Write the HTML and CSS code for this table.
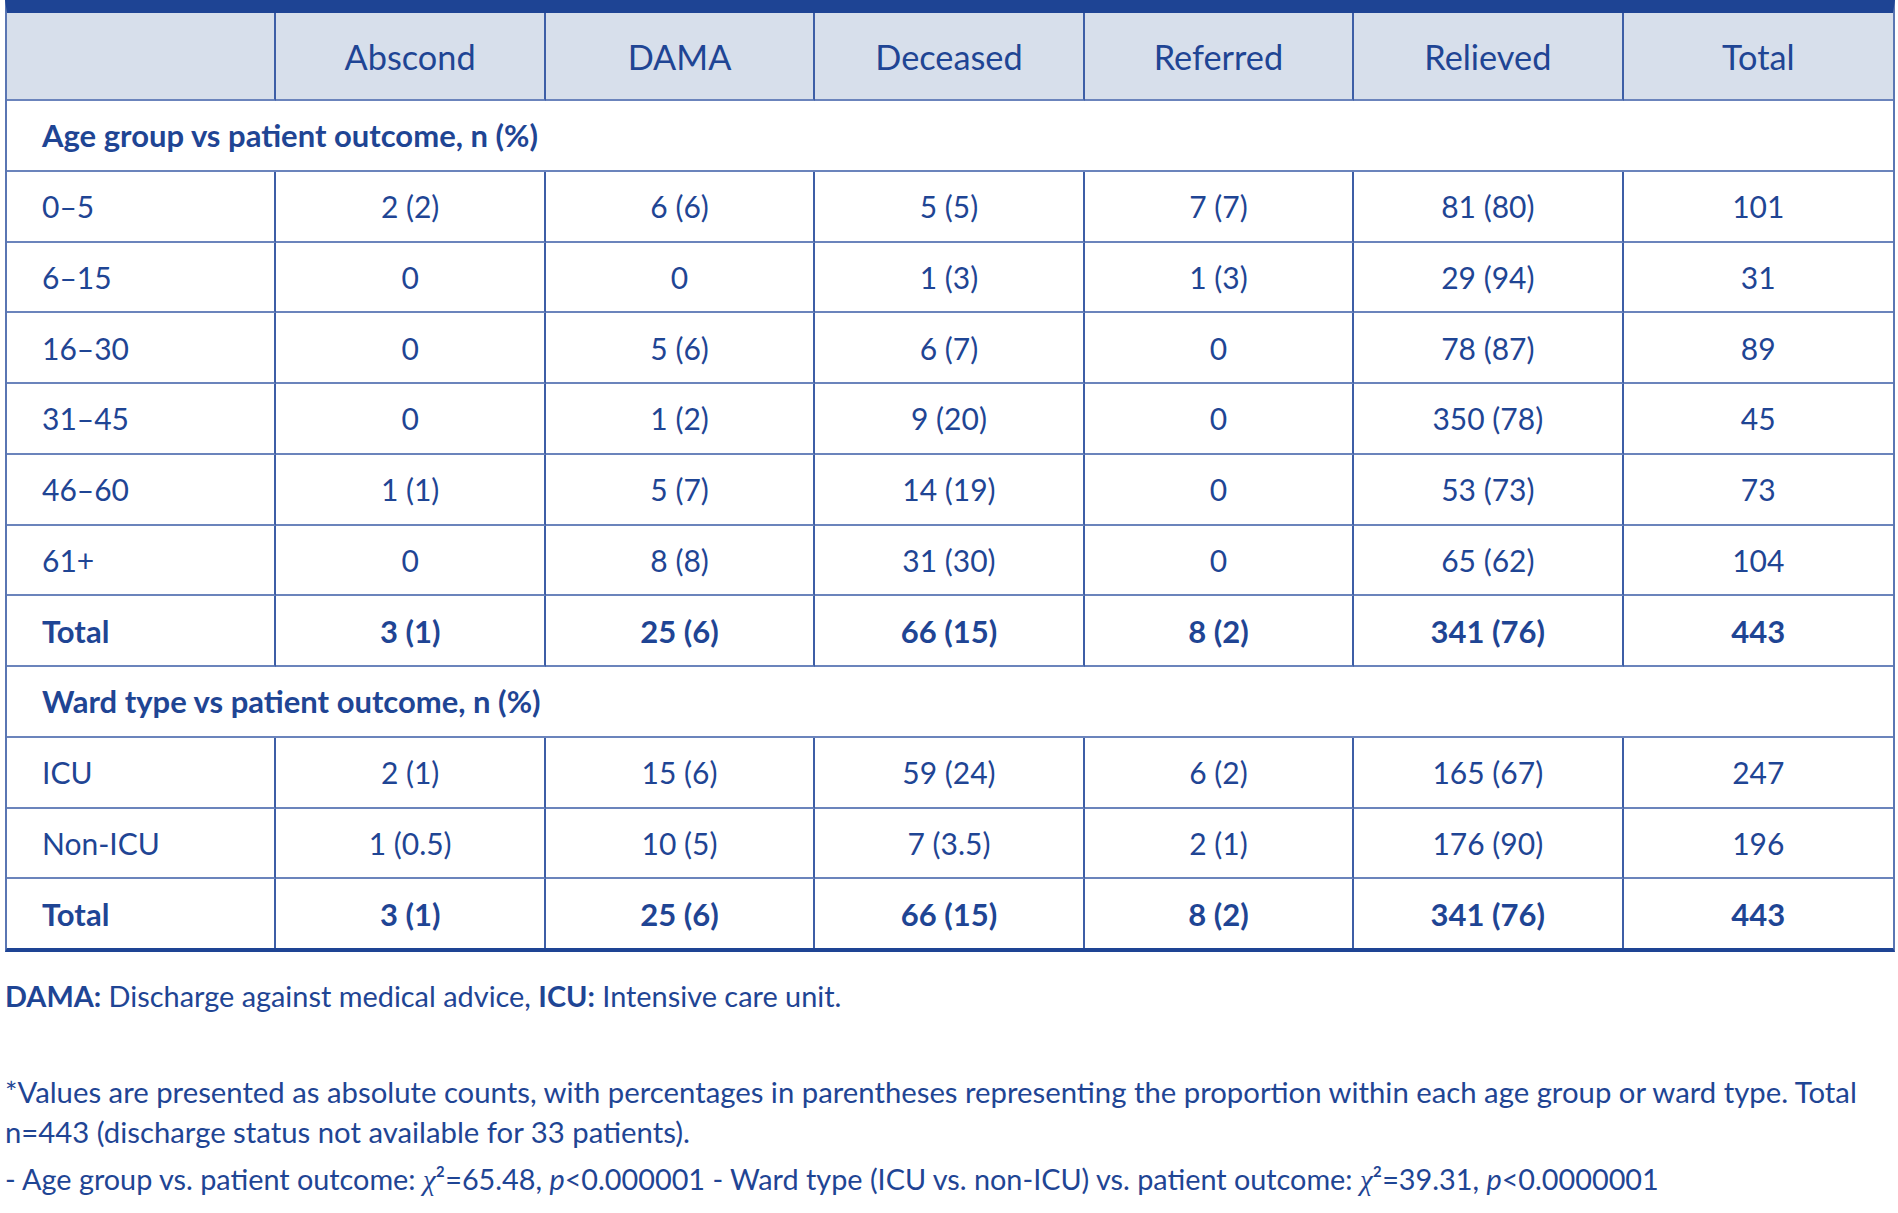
FILE: index.html
```html
<!DOCTYPE html>
<html lang="en">
<head>
<meta charset="utf-8">
<title>Patient outcome by age group and ward type</title>
<link rel="stylesheet" href="styles.css">
</head>
<body>
<main class="page">
  <table class="outcomes">
    <thead>
      <tr>
        <th></th>
        <th>Abscond</th>
        <th>DAMA</th>
        <th>Deceased</th>
        <th>Referred</th>
        <th>Relieved</th>
        <th>Total</th>
      </tr>
    </thead>
    <tbody>
      <tr class="section"><td colspan="7">Age group vs patient outcome, n (%)</td></tr>
      <tr><td>0–5</td><td>2 (2)</td><td>6 (6)</td><td>5 (5)</td><td>7 (7)</td><td>81 (80)</td><td>101</td></tr>
      <tr><td>6–15</td><td>0</td><td>0</td><td>1 (3)</td><td>1 (3)</td><td>29 (94)</td><td>31</td></tr>
      <tr><td>16–30</td><td>0</td><td>5 (6)</td><td>6 (7)</td><td>0</td><td>78 (87)</td><td>89</td></tr>
      <tr><td>31–45</td><td>0</td><td>1 (2)</td><td>9 (20)</td><td>0</td><td>350 (78)</td><td>45</td></tr>
      <tr><td>46–60</td><td>1 (1)</td><td>5 (7)</td><td>14 (19)</td><td>0</td><td>53 (73)</td><td>73</td></tr>
      <tr><td>61+</td><td>0</td><td>8 (8)</td><td>31 (30)</td><td>0</td><td>65 (62)</td><td>104</td></tr>
      <tr class="total"><td>Total</td><td>3 (1)</td><td>25 (6)</td><td>66 (15)</td><td>8 (2)</td><td>341 (76)</td><td>443</td></tr>
      <tr class="section"><td colspan="7">Ward type vs patient outcome, n (%)</td></tr>
      <tr><td>ICU</td><td>2 (1)</td><td>15 (6)</td><td>59 (24)</td><td>6 (2)</td><td>165 (67)</td><td>247</td></tr>
      <tr><td>Non-ICU</td><td>1 (0.5)</td><td>10 (5)</td><td>7 (3.5)</td><td>2 (1)</td><td>176 (90)</td><td>196</td></tr>
      <tr class="total last"><td>Total</td><td>3 (1)</td><td>25 (6)</td><td>66 (15)</td><td>8 (2)</td><td>341 (76)</td><td>443</td></tr>
    </tbody>
  </table>

  <div class="notes">
    <p class="abbr"><b>DAMA:</b> Discharge against medical advice, <b>ICU:</b> Intensive care unit.</p>
    <p class="foot">*Values are presented as absolute counts, with percentages in parentheses representing the proportion within each age group or ward type. Total n=443 (discharge status not available for 33 patients).</p>
    <p class="stats">- Age group vs. patient outcome: <span class="chi">χ</span>²=65.48, <i>p</i>&lt;0.000001 - Ward type (ICU vs. non-ICU) vs. patient outcome: <span class="chi">χ</span>²=39.31, <i>p</i>&lt;0.0000001</p>
  </div>
</main>
</body>
</html>
```
FILE: styles.css
```css
html, body {
  margin: 0;
  padding: 0;
  background: #ffffff;
}

body {
  font-family: Lato, "Open Sans", "Noto Sans", sans-serif;
  color: #1f4594;
}

.page {
  padding: 0 3px 0 5px;
}

.outcomes {
  width: 100%;
  table-layout: fixed;
  border-collapse: separate;
  border-spacing: 0;
  border-top: 13px solid #1e4494;
  border-left: 2px solid #5a76b3;
  border-right: 2px solid #5a76b3;
  border-bottom: 4px solid #1e4494;
}

.outcomes th {
  box-sizing: border-box;
  height: 88px;
  padding: 0;
  background: #d7dfeb;
  font-weight: 400;
  font-size: 34.3px;
  text-align: center;
  vertical-align: middle;
  border-right: 2px solid #3d5ea6;
  border-bottom: 2px solid #6b84bc;
}

.outcomes td {
  box-sizing: border-box;
  height: 70.75px;
  padding: 0;
  font-size: 30px;
  text-align: center;
  vertical-align: middle;
  border-right: 2px solid #3d5ea6;
  border-bottom: 2px solid #6b84bc;
}

.outcomes th:last-child,
.outcomes td:last-child {
  border-right: 0;
}

.outcomes td:first-child {
  text-align: left;
  padding-left: 35px;
}

.outcomes .section td {
  font-weight: 700;
  font-size: 31px;
  border-right: 0;
}

.outcomes .total td {
  font-weight: 700;
  font-size: 31px;
}

.outcomes .last td {
  border-bottom: 0;
  height: 68.75px;
}

.notes {
  font-size: 29.3px;
  line-height: 40px;
}

.notes p {
  margin: 0;
}

.notes b {
  font-weight: 700;
}

.notes .abbr {
  margin-top: 24px;
  font-size: 28.9px;
}

.notes .foot {
  margin-top: 56px;
}

.notes .stats {
  margin-top: 7px;
  font-size: 28.8px;
}

.chi {
  font-family: "Liberation Serif", "DejaVu Serif", serif;
  font-style: italic;
}

.stats i {
  font-style: italic;
}
```
